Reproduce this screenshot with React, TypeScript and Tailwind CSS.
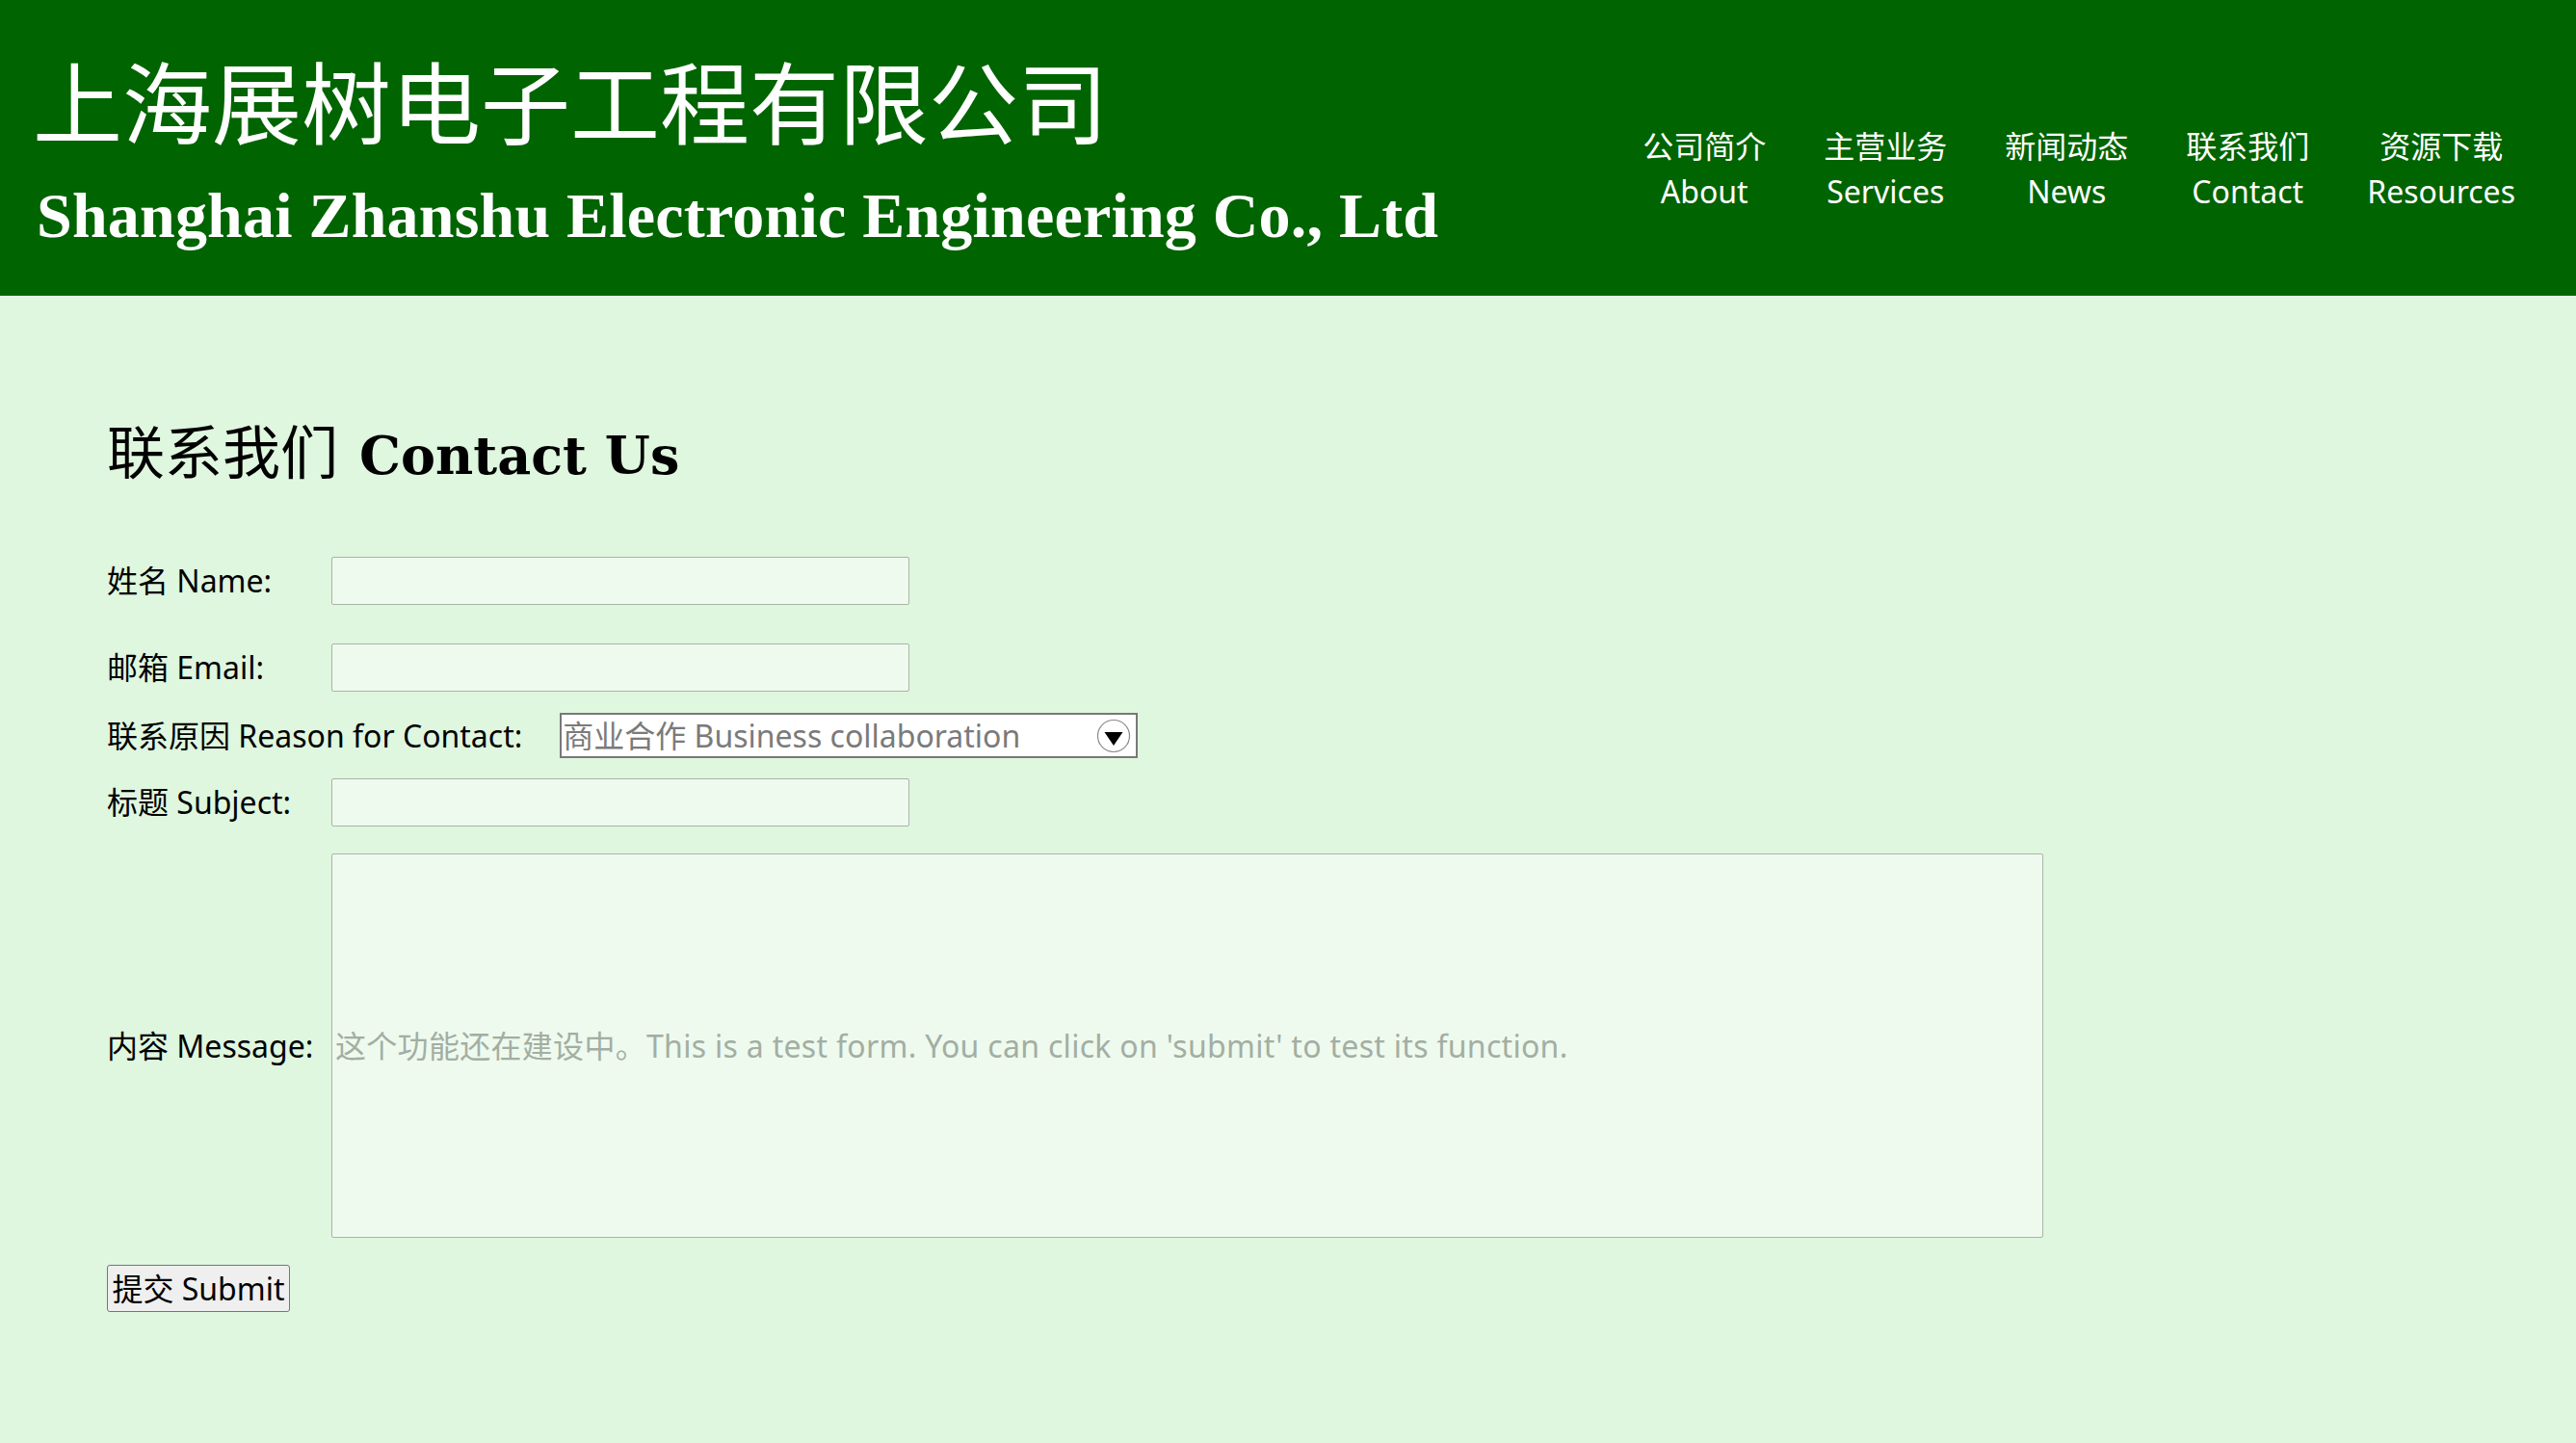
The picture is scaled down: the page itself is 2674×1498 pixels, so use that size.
import React from "react";

const navItems = [
  { zh: "公司简介", en: "About" },
  { zh: "主营业务", en: "Services" },
  { zh: "新闻动态", en: "News" },
  { zh: "联系我们", en: "Contact" },
  { zh: "资源下载", en: "Resources" },
];

const sans = "font-['Noto_Sans','Noto_Sans_CJK_SC',sans-serif]";

function Header() {
  return (
    <header className="h-[307px] bg-[#006400] flex items-start justify-between text-white">
      <div className="pl-[34px] pt-[55px]">
        <h1 className="text-[93px] leading-[96px] font-normal font-['Noto_Sans_CJK_SC',sans-serif] whitespace-nowrap">
          上海展树电子工程有限公司
        </h1>
        <p className="mt-[40px] pl-[4px] text-[66px] leading-[66px] font-bold font-['Liberation_Serif',serif] whitespace-nowrap tracking-[0.2px]">
          Shanghai Zhanshu Electronic Engineering Co., Ltd
        </p>
      </div>
      <nav className={`pt-[128px] pr-[63px] ${sans}`}>
        <ul className="flex gap-[60px]">
          {navItems.map((item) => (
            <li key={item.en} className="flex flex-col items-center text-[32px] leading-[47px]">
              <span>{item.zh}</span>
              <span>{item.en}</span>
            </li>
          ))}
        </ul>
      </nav>
    </header>
  );
}

function Row({
  label,
  labelClass = "w-[233px]",
  children,
  className = "",
}: {
  label: string;
  labelClass?: string;
  children: React.ReactNode;
  className?: string;
}) {
  return (
    <div className={`flex items-center ${className}`}>
      <label className={`shrink-0 whitespace-nowrap text-[32px] leading-[44px] text-black ${labelClass}`}>{label}</label>
      {children}
    </div>
  );
}

const inputCls =
  "block w-[600px] h-[50px] bg-[#eefaee] border border-[#a9b4a9] rounded-[2px] px-[3px] text-[32px] outline-none";

export default function App() {
  return (
    <div className={`min-h-[1498px] bg-[#dff6df] ${sans}`}>
      <Header />
      <main className="pl-[111px] pt-[129px]">
        <h2 className="flex items-baseline gap-[22px] whitespace-nowrap">
          <span className="text-[60px] leading-[60px] font-normal font-['Noto_Sans_CJK_SC',sans-serif]">联系我们</span>
          <span className="text-[54px] leading-[60px] font-bold font-['DejaVu_Serif',serif]">Contact Us</span>
        </h2>

        <form className="flex flex-col" onSubmit={(e) => e.preventDefault()}>
          <Row label="姓名 Name:" className="mt-[75px]">
            <input className={inputCls} type="text" />
          </Row>
          <Row label="邮箱 Email:" className="mt-[40px]">
            <input className={inputCls} type="email" />
          </Row>
          <Row label="联系原因 Reason for Contact:" labelClass="mr-[39px]" className="mt-[22px]">
            <div className="relative w-[600px] h-[47px] bg-white border-2 border-[#787878] flex items-center">
              <span className="pl-[1px] text-[32px] leading-[44px] text-[#7a7a7a] whitespace-nowrap">
                商业合作 Business collaboration
              </span>
              <svg className="absolute right-[5px] top-[4px]" width="36" height="36" viewBox="0 0 36 36">
                <circle cx="18" cy="18" r="16.5" fill="white" stroke="#8a8a8a" strokeWidth="1.2" />
                <path d="M8.5 14 L27.5 14 L18 28 Z" fill="#000" />
              </svg>
            </div>
          </Row>
          <Row label="标题 Subject:" className="mt-[21px]">
            <input className={inputCls} type="text" />
          </Row>
          <Row label="内容 Message:" className="mt-[28px]">
            <input
              className="block w-[1777px] h-[399px] bg-[#eefaee] border border-[#a9b4a9] rounded-[2px] px-[3px] text-[32px] tracking-[0.3px] outline-none placeholder:text-[#a3aea3]"
              type="text"
              placeholder="这个功能还在建设中。This is a test form. You can click on 'submit' to test its function."
            />
          </Row>
          <div className="mt-[28px]">
            <button
              type="submit"
              className="h-[49px] w-[190px] bg-[#efefef] border border-[#767676] rounded-[3px] text-[32px] leading-[44px] text-black whitespace-nowrap"
            >
              提交 Submit
            </button>
          </div>
        </form>
      </main>
    </div>
  );
}
